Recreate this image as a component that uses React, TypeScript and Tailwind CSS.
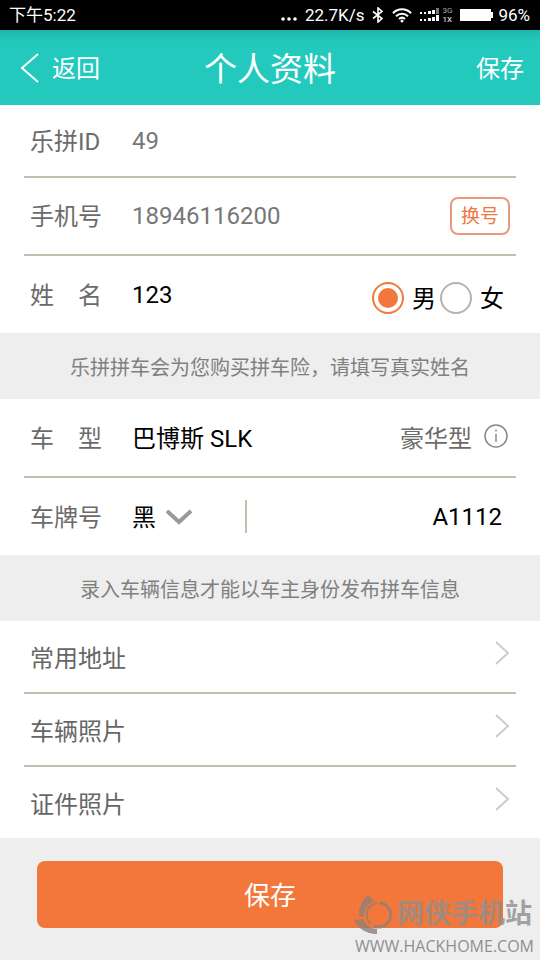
import { useState } from "react";
import type { ReactNode } from "react";

const LABEL = "w-[102px] shrink-0 pt-0.5 text-2xl leading-8 text-[#6b6b6b]";

function StatusBar() {
  return (
    <div className="flex h-[30px] items-center bg-black pl-[9px] pr-2.5 text-[17px] leading-5 text-white">
      <span>下午5:22</span>
      <div className="ml-auto flex items-center">
        <svg className="mr-2 h-5 w-4" viewBox="0 0 16 20" fill="#fff" aria-hidden="true">
          <circle cx="2" cy="14" r="1.8" />
          <circle cx="8" cy="14" r="1.8" />
          <circle cx="14" cy="14" r="1.8" />
        </svg>
        <span>22.7K/s</span>
        <svg className="ml-2 h-4 w-3" viewBox="0 0 12 16" fill="none" stroke="#fff" strokeWidth="1.6" aria-hidden="true">
          <path d="M1 4.500 10 11.500 6 15V1l4 3.500L1 11.500" />
        </svg>
        <svg className="ml-2 h-4 w-5" viewBox="0 0 20 16" fill="none" stroke="#fff" strokeWidth="2" aria-hidden="true">
          <path d="M1 6.200a12.500 12.500 0 0 1 18 0M4 9.200a8.500 8.500 0 0 1 12 0M7 12a4.500 4.500 0 0 1 6 0" />
          <circle cx="10" cy="14" r="1.500" fill="#fff" stroke="none" />
        </svg>
        <svg className="ml-2 h-4 w-5" viewBox="0 0 20 16" fill="#fff" aria-hidden="true">
          <path d="M0 5h2v2H0zM4 5h2v2H4zM8 4h3v3H8zM12 3h3v4h-3zM0 12h2v2H0zM4 12h2v2H4zM8 11h3v3H8zM12 10h3v4h-3zM16 8h3v6h-3z" />
          <path fill="#777" d="M16 1h3v6h-3z" />
        </svg>
        <span className="ml-0.5 flex flex-col text-[8px] leading-[9px]">
          <span className="text-[#aaa]">3G</span>
          <span>1X</span>
        </span>
        <svg className="ml-2 mr-1 h-3 w-[34px]" viewBox="0 0 34 12" fill="#fff" aria-hidden="true">
          <path d="M0 0h31v3h2v6h-2v3H0z" />
        </svg>
        <span>96%</span>
      </div>
    </div>
  );
}

function Header() {
  return (
    <header className="grid h-[75px] grid-cols-[1fr_auto_1fr] items-center bg-[#23c9bd] bg-linear-to-b from-[#20b5aa] to-[#23c9bd] to-15% px-4 text-white">
      <button type="button" className="flex items-center gap-3 justify-self-start pl-1 text-2xl">
        <svg className="h-8 w-5" viewBox="0 0 20 32" fill="none" stroke="#fff" strokeWidth="2" aria-hidden="true">
          <path d="M18 2 2 16l16 14" />
        </svg>
        <span className="pt-0.5">返回</span>
      </button>
      <h1 className="pt-1 text-[33px] leading-10">个人资料</h1>
      <button type="button" className="justify-self-end pt-0.5 text-2xl">
        保存
      </button>
    </header>
  );
}

function Row({ children, last = false, height }: { children: ReactNode; last?: boolean; height: string }) {
  return (
    <div className={`mx-6 flex items-center pl-1.5 ${height} ${last ? "" : "border-b-2 border-[#c2c0ad]"}`}>
      {children}
    </div>
  );
}

function Hint({ children }: { children: ReactNode }) {
  return <p className="flex h-[66px] items-center justify-center bg-[#eee] pt-1 text-xl text-[#808080]">{children}</p>;
}

function Gender({ label, checked, onSelect }: { label: string; checked: boolean; onSelect: () => void }) {
  return (
    <label className="flex items-center gap-2 text-2xl leading-8 text-black">
      <input
        type="radio"
        name="gender"
        checked={checked}
        onChange={onSelect}
        className="grid size-8 appearance-none place-items-center rounded-full border-2 border-[#b3b3b3] bg-white before:size-5 before:rounded-full checked:border-[#f3763c] checked:before:bg-[#f3763c]"
      />
      <span className="pt-0.5">{label}</span>
    </label>
  );
}

function LinkRow({ label, last = false }: { label: string; last?: boolean }) {
  return (
    <a
      href="#"
      className={`mx-6 flex items-center justify-between pl-1.5 pr-1.5 pt-1 text-2xl text-[#666] ${last ? "h-[71px]" : "h-[73px] border-b-2 border-[#c2c0ad]"}`}
    >
      {label}
      <svg className="mb-3 h-6 w-4" viewBox="0 0 16 24" fill="none" stroke="#ccc" strokeWidth="2" aria-hidden="true">
        <path d="M2 1l12 11L2 23" />
      </svg>
    </a>
  );
}

function Watermark() {
  return (
    <div className="pointer-events-none absolute bottom-0.5 right-1.5 flex flex-col items-end text-[#8f8f8f]">
      <div className="flex items-center gap-1 pr-0.5 opacity-80">
        <svg className="h-10 w-10" viewBox="0 0 40 40" fill="none" aria-hidden="true">
          <path fill="#8f8078" d="M15 1l6 6A16 16 0 0 0 11 23L6 22A25 25 0 0 1 15 1Z" />
          <path fill="#8f8078" d="M1 26l9-1a15 15 0 0 0 14 10v5A24 24 0 0 1 1 26Z" />
          <path stroke="#8f8078" strokeWidth="2" d="M24 9a12 12 0 0 0-6 21" />
          <path stroke="#8f8078" strokeWidth="3" d="M26 9a12 12 0 1 1-5 23" />
        </svg>
        <span className="text-[27px] font-bold leading-8">网侠手机站</span>
      </div>
      <span className="font-['Open_Sans',sans-serif] text-base leading-6">WWW.HACKHOME.COM</span>
    </div>
  );
}

export default function App() {
  const [gender, setGender] = useState("男");
  return (
    <div className="relative flex min-h-screen flex-col bg-[#eee] font-[Roboto,'Noto_Sans_CJK_SC',sans-serif]">
      <StatusBar />
      <Header />
      <main>
        <section className="bg-white">
          <Row height="h-[73px]">
            <span className={LABEL}>乐拼ID</span>
            <span className="text-2xl text-[#777]">49</span>
          </Row>
          <Row height="h-[78px]">
            <span className={LABEL}>手机号</span>
            <span className="text-2xl text-[#777]">18946116200</span>
            <button
              type="button"
              className="ml-auto mr-1.5 h-[38px] w-[60px] rounded-lg border-2 border-[#e99a76] pt-0.5 text-[19px] leading-8 text-[#ee7840]"
            >
              换号
            </button>
          </Row>
          <Row height="h-[77px]" last>
            <label htmlFor="name" className={LABEL}>
              姓　名
            </label>
            <input id="name" defaultValue="123" className="w-0 min-w-0 flex-1 text-2xl text-black" />
            <div className="flex gap-1 pr-3 pt-1.5">
              <Gender label="男" checked={gender === "男"} onSelect={() => setGender("男")} />
              <Gender label="女" checked={gender === "女"} onSelect={() => setGender("女")} />
            </div>
          </Row>
        </section>
        <Hint>乐拼拼车会为您购买拼车险，请填写真实姓名</Hint>
        <section className="bg-white">
          <Row height="h-[79px]">
            <label htmlFor="model" className={LABEL}>
              车　型
            </label>
            <input id="model" defaultValue="巴博斯 SLK" className="w-0 min-w-0 flex-1 pt-0.5 text-2xl text-black" />
            <span className="pt-0.5 text-2xl text-[#6b6b6b]">豪华型</span>
            <button type="button" aria-label="车型说明" className="mb-1 ml-3 mr-2">
              <svg className="size-6" viewBox="0 0 24 24" fill="none" stroke="#888" aria-hidden="true">
                <circle cx="12" cy="12" r="11" strokeWidth="1.500" />
                <path d="M12 10v8M12 5.500v2" strokeWidth="1.500" />
              </svg>
            </button>
          </Row>
          <Row height="h-[77px]" last>
            <label htmlFor="plate" className={LABEL}>
              车牌号
            </label>
            <div className="grid w-[60px] items-center">
              <select aria-label="省份" className="col-start-1 row-start-1 appearance-none pt-0.5 text-2xl text-black">
                <option>黑</option>
              </select>
              <svg
                className="pointer-events-none col-start-1 row-start-1 h-4 w-[26px] justify-self-end"
                viewBox="0 0 26 16"
                fill="none"
                stroke="#999"
                strokeWidth="4"
                aria-hidden="true"
              >
                <path d="M1 2l12 11L25 2" />
              </svg>
            </div>
            <div className="ml-[53px] h-[33px] w-0.5 bg-[#c2c0ad]" />
            <input id="plate" defaultValue="A1112" className="mr-3.5 w-0 min-w-0 flex-1 text-right text-2xl text-black" />
          </Row>
        </section>
        <Hint>录入车辆信息才能以车主身份发布拼车信息</Hint>
        <nav className="bg-white">
          <LinkRow label="常用地址" />
          <LinkRow label="车辆照片" />
          <LinkRow label="证件照片" last />
        </nav>
      </main>
      <div className="px-[37px] pb-8 pt-[23px]">
        <button type="button" className="h-[67px] w-full rounded-lg bg-[#f3763a] pt-1 text-[26px] text-white">
          保存
        </button>
      </div>
      <Watermark />
    </div>
  );
}
